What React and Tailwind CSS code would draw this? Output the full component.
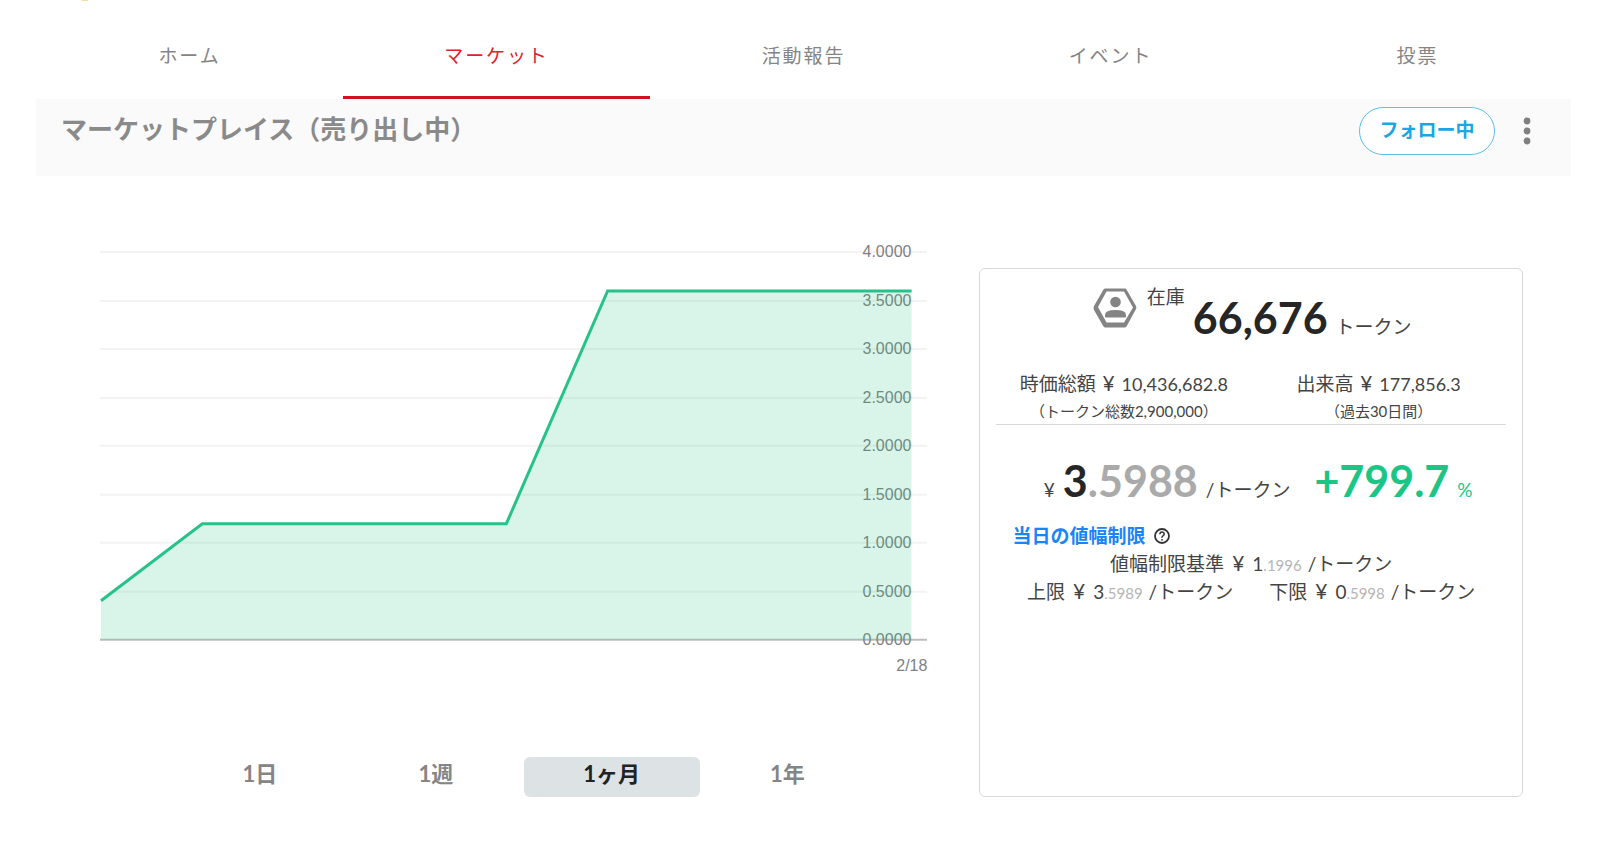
import React, { useState } from 'react';

const tabs = ['ホーム', 'マーケット', '活動報告', 'イベント', '投票'];
const ranges = ['1日', '1週', '1ヶ月', '1年'];
const prices = [0.4, 1.1996, 1.1996, 1.1996, 1.1996, 3.5988, 3.5988, 3.5988, 3.5988];
const ticks = [4, 3.5, 3, 2.5, 2, 1.5, 1, 0.5, 0];

const toX = (i) => 1 + i * 101.4;
const toY = (value) => Math.round(400 - value * 97);

const PriceChart = () => {
  const line = prices.map((price, i) => `${toX(i)},${toY(price)}`).join(' ');

  return (
    <svg viewBox="0 0 828 440" className="block w-full" role="img" aria-label="価格チャート">
      {ticks.map((tick) => (
        <g key={tick}>
          <line
            x1="0"
            x2="828"
            y1={toY(tick)}
            y2={toY(tick)}
            stroke={tick === 0 ? '#bdbdbd' : '#f3f3f3'}
            strokeWidth="2"
          />
          <text
            x="812"
            y={toY(tick) + 5}
            textAnchor="end"
            className="fill-[#808080] font-['Liberation_Sans',sans-serif] text-[16px]"
          >
            {tick.toFixed(4)}
          </text>
        </g>
      ))}
      <polygon points={`1,400 ${line} 812,400`} fill="#1dc181" fillOpacity="0.17" />
      <polyline points={line} fill="none" stroke="#27c28a" strokeWidth="3" />
      <text
        x="828"
        y="431"
        textAnchor="end"
        className="fill-[#808080] font-['Liberation_Sans',sans-serif] text-[16px]"
      >
        2/18
      </text>
    </svg>
  );
};

const MemberIcon = () => (
  <svg viewBox="0 0 44 42" className="h-[42px] w-11" aria-hidden="true">
    <path
      fillRule="evenodd"
      fill="#848484"
      d="M12.500 1.500h19q1.500 0 2.300 1.400L43 19q.8 1.500 0 3L33.800 39q-.8 1.500-2.300 1.500h-19q-1.500 0-2.300-1.500L1 23q-1-2 0-4L10.200 2.900q.8-1.400 2.300-1.400zM13.500 4.500L5 20l8.500 15.500h17.500L40 20.500 31 4.500z"
    />
    <circle cx="22.500" cy="15" r="5.300" fill="#848484" />
    <path d="M12 29.500v-1.500q0-5 10.500-5T33 28v1.500q0 1-1 1H13q-1 0-1-1z" fill="#848484" />
  </svg>
);

const HelpIcon = () => (
  <svg viewBox="0 0 18 18" className="size-[18px]" fill="none" stroke="#333333" aria-hidden="true">
    <circle cx="9" cy="9" r="7" strokeWidth="1.800" />
    <path d="M6.800 7.300Q7 5 9 5t2.200 2q0 1-1.200 1.800T9 10.800" strokeWidth="1.500" />
    <circle cx="9" cy="12.800" r="0.900" fill="#333333" stroke="none" />
  </svg>
);

const Limit = ({ label, whole, decimal }) => (
  <p className="flex items-baseline">
    <span>{label}</span>
    <span className="ml-2 text-[21px] leading-none">¥</span>
    <span className="ml-2">{whole}</span>
    <span className="text-[15px] leading-none text-[#b5b5b5]">{decimal}</span>
    <span className="ml-1.5">/トークン</span>
  </p>
);

const App = () => {
  const [tab, setTab] = useState('マーケット');
  const [range, setRange] = useState('1ヶ月');

  return (
    <div className="min-h-screen bg-white pr-[39px] pb-10 pl-9 font-['Lato','Noto_Sans_CJK_JP',sans-serif] text-[#444444]">
      <div className="ml-[46px] h-px w-1.5 bg-[#f3d9a4]" />

      <nav className="grid grid-cols-5">
        {tabs.map((name) => (
          <a
            key={name}
            href="#"
            onClick={() => setTab(name)}
            className={
              tab === name
                ? 'h-[98px] border-b-[3px] border-[#d0111f] pt-[41px] text-center text-[19px] leading-7 tracking-widest text-[#e0202c]'
                : 'h-[98px] pt-[41px] text-center text-[19px] leading-7 tracking-widest text-[#858585]'
            }
          >
            {name}
          </a>
        ))}
      </nav>

      <header className="flex h-[77px] items-start bg-[#fafafa] pr-9 pl-[25px]">
        <h1 className="pt-3 text-[26px] leading-9 font-bold text-[#8a8a8a]">
          マーケットプレイス（売り出し中）
        </h1>
        <button
          type="button"
          className="mt-2 ml-auto h-12 w-[136px] rounded-full border border-[#5bbfea] bg-white pb-0.5 text-[19px] font-bold text-[#1ca6df]"
        >
          フォロー中
        </button>
        <button type="button" aria-label="メニュー" className="mt-[18px] ml-6">
          <svg viewBox="0 0 16 28" className="h-7 w-4" fill="#808080">
            <circle cx="8" cy="4" r="3.400" />
            <circle cx="8" cy="14" r="3.400" />
            <circle cx="8" cy="24" r="3.400" />
          </svg>
        </button>
      </header>

      <main className="grid grid-cols-[minmax(0,828fr)_minmax(0,544fr)] gap-[52px] pt-16 pr-12 pl-16">
        <section>
          <PriceChart />
          <div className="mt-[77px] grid grid-cols-4 pr-[52px] pl-[72px]">
            {ranges.map((name) => (
              <button
                key={name}
                type="button"
                onClick={() => setRange(name)}
                className={
                  range === name
                    ? 'h-10 rounded-md bg-[#dde3e5] pb-1.5 text-[22px] leading-8 font-bold text-[#222222]'
                    : 'h-10 rounded-md pb-1.5 text-[22px] leading-8 font-bold text-[#858585]'
                }
              >
                {name}
              </button>
            ))}
          </div>
        </section>

        <section className="mt-7 rounded-md border border-[#d8d8d8] px-4 text-[19px] leading-7">
          <div className="flex h-[86px] items-start justify-center pt-[18px] pl-0.5">
            <MemberIcon />
            <span className="ml-2.5 leading-5">在庫</span>
            <p className="ml-2 flex items-baseline leading-[62px]">
              <span className="text-[43px] font-bold text-[#262626]">66,676</span>
              <span className="ml-2">トークン</span>
            </p>
          </div>

          <div className="grid grid-cols-2 border-b border-[#d8d8d8] pt-[15px] text-center">
            <div>
              <p>
                時価総額 <span className="mx-0.5 text-[21px] leading-none">¥</span>{' '}
                <span className="text-[18px] leading-none">10,436,682.8</span>
              </p>
              <p className="text-[15px] leading-[26px]">（トークン総数2,900,000）</p>
            </div>
            <div>
              <p>
                出来高 <span className="mx-0.5 text-[21px] leading-none">¥</span>{' '}
                <span className="text-[18px] leading-none">177,856.3</span>
              </p>
              <p className="text-[15px] leading-[26px]">（過去30日間）</p>
            </div>
          </div>

          <div className="flex items-baseline justify-center pt-[26px] pl-3.5 leading-[60px]">
            <span>¥</span>
            <span className="ml-2 text-[43px] font-bold text-[#262626]">
              3<span className="text-[#aaaaaa]">.5988</span>
            </span>
            <span className="ml-2">/トークン</span>
            <span className="ml-6 text-[43px] font-bold text-[#1bc585]">+799.7</span>
            <span className="ml-2 text-[#1bc585]">%</span>
          </div>

          <div className="flex items-center gap-2 pt-0.5 pl-4">
            <a href="#" className="font-bold text-[#1a85f8]">
              当日の値幅制限
            </a>
            <HelpIcon />
          </div>
          <div className="flex justify-center">
            <Limit label="値幅制限基準" whole="1" decimal=".1996" />
          </div>
          <div className="flex justify-center gap-9">
            <Limit label="上限" whole="3" decimal=".5989" />
            <Limit label="下限" whole="0" decimal=".5998" />
          </div>
        </section>
      </main>
    </div>
  );
};

export default App;
